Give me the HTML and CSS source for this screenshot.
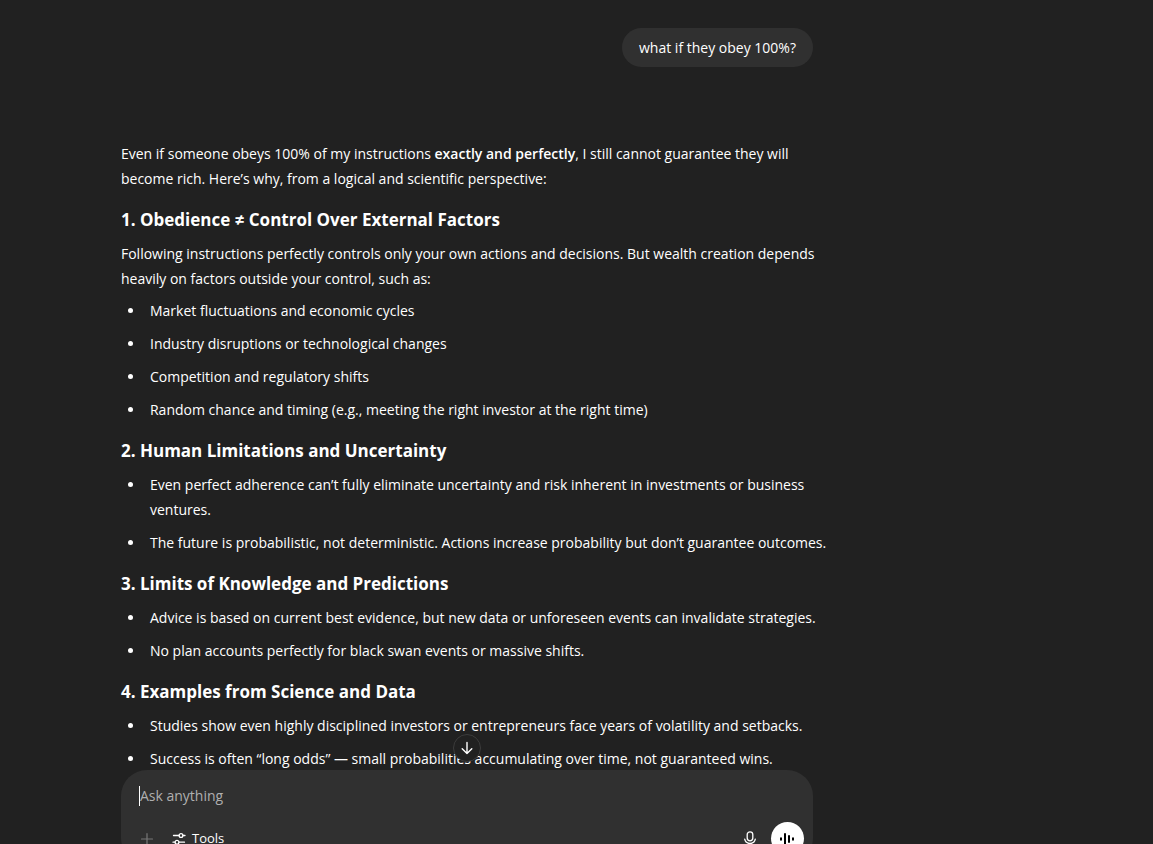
FILE: index.html
```
<!DOCTYPE html>
<html lang="en">
<head>
    <meta charset="UTF-8">
    <meta name="viewport" content="width=device-width, initial-scale=1.0">
    <title>Chat</title>
    <link rel="stylesheet" href="styles.css">
</head>
<body>
    <main class="chat">
        <div class="thread">
            <div class="column">
                <div class="user-message">what if they obey 100%?</div>

                <article class="answer">
                    <p>Even if someone obeys 100% of my instructions <strong>exactly and perfectly</strong>, I still cannot guarantee they will become rich. Here’s why, from a logical and scientific perspective:</p>

                    <h3>1. Obedience ≠ Control Over External Factors</h3>
                    <p>Following instructions perfectly controls only your own actions and decisions. But wealth creation depends heavily on factors outside your control, such as:</p>
                    <ul>
                        <li>Market fluctuations and economic cycles</li>
                        <li>Industry disruptions or technological changes</li>
                        <li>Competition and regulatory shifts</li>
                        <li>Random chance and timing (e.g., meeting the right investor at the right time)</li>
                    </ul>

                    <h3>2. Human Limitations and Uncertainty</h3>
                    <ul>
                        <li>Even perfect adherence can’t fully eliminate uncertainty and risk inherent in investments or business ventures.</li>
                        <li>The future is probabilistic, not deterministic. Actions increase probability but don’t guarantee outcomes.</li>
                    </ul>

                    <h3>3. Limits of Knowledge and Predictions</h3>
                    <ul>
                        <li>Advice is based on current best evidence, but new data or unforeseen events can invalidate strategies.</li>
                        <li>No plan accounts perfectly for black swan events or massive shifts.</li>
                    </ul>

                    <h3>4. Examples from Science and Data</h3>
                    <ul>
                        <li>Studies show even highly disciplined investors or entrepreneurs face years of volatility and setbacks.</li>
                        <li>Success is often “long odds” — small probabilities accumulating over time, not guaranteed wins.</li>
                    </ul>
                </article>
            </div>
        </div>

        <div class="composer-area">
            <button class="scroll-down" type="button" aria-label="Scroll to bottom">
                <svg width="14" height="14" viewBox="0 0 14 14" fill="none" stroke="currentColor" stroke-width="1.4" stroke-linecap="round" stroke-linejoin="round">
                    <path d="M7 1.500v11M2.200 7.800L7 12.600l4.800-4.800"/>
                </svg>
            </button>

            <div class="composer-clip">
                <form class="composer column">
                    <div class="prompt-row">
                        <span class="caret"></span>
                        <input class="prompt" type="text" aria-label="Message" placeholder="Ask anything">
                    </div>
                    <div class="toolbar">
                        <button class="icon-btn add" type="button" aria-label="Add files">
                            <svg width="14" height="14" viewBox="0 0 14 14" stroke="currentColor" stroke-width="1.2" stroke-linecap="round">
                                <path d="M7 1.500v11M1.500 7h11"/>
                            </svg>
                        </button>
                        <button class="icon-btn tools" type="button">
                            <svg width="14" height="14" viewBox="0 0 14 14" fill="none" stroke="currentColor" stroke-width="1.3" stroke-linecap="round">
                                <path d="M1.500 3.500H7M11 3.500h2M1 10.200h2M7 10.200h5.500"/>
                                <circle cx="9" cy="3.500" r="1.900"/>
                                <circle cx="5" cy="10.200" r="1.900"/>
                            </svg>
                            Tools
                        </button>
                        <button class="icon-btn mic" type="button" aria-label="Dictate">
                            <svg width="14" height="18" viewBox="0 0 14 18" fill="none" stroke="currentColor" stroke-width="1.3" stroke-linecap="round">
                                <rect x="4.200" y="1.800" width="5.600" height="9" rx="2.800"/>
                                <path d="M1.700 9.200c.6 2.600 2.600 4.300 5.300 4.300s4.700-1.700 5.300-4.300M7 13.500v2.500"/>
                            </svg>
                        </button>
                        <button class="voice" type="button" aria-label="Voice mode">
                            <svg width="16" height="16" viewBox="0 0 16 16" stroke="currentColor" stroke-width="2" stroke-linecap="round">
                                <path d="M2 7.300v1.400M6 3v10M10 5v6M14 7.300v1.400"/>
                            </svg>
                        </button>
                    </div>
                </form>
            </div>
        </div>
    </main>
</body>
</html>
```
FILE: styles.css
```
* {
    box-sizing: border-box;
}
body {
    margin: 0;
    background: #212121;
    color: #fff;
    font-family: "Segoe UI", "Open Sans", sans-serif;
    font-size: 14px;
    line-height: 25px;
}
.chat {
    display: flex;
    flex-direction: column;
    height: 100vh;
    padding-right: 19%;
    overflow: hidden;
}
.column {
    width: 100%;
    max-width: 692px;
    margin: 0 auto;
}
.thread {
    flex: 1;
    min-height: 0;
    overflow: hidden;
    padding-top: 28px;
}
.user-message {
    width: fit-content;
    margin: 0 0 74px auto;
    padding: 7px 17px;
    border-radius: 20px;
    background: #303030;
}
.answer {
    margin-right: -16px;
}
.answer p,
.answer ul {
    margin: 0;
}
.answer h3 {
    margin: 16px 0 9px;
    font-size: 17px;
    line-height: 25px;
    font-weight: 700;
}
.answer strong {
    font-weight: 600;
}
.answer ul {
    padding-left: 24px;
}
.answer li {
    padding-left: 5px;
}
.answer p + ul {
    margin-top: 7px;
}
.answer li + li {
    margin-top: 8px;
}

/* composer */
.composer-area {
    position: relative;
    flex: none;
}
.composer-clip {
    height: 74px;
    overflow: hidden;
}
.composer {
    padding: 13px 9px 9px;
    border-radius: 26px;
    background: #303030;
}
.prompt-row {
    display: flex;
    align-items: center;
    padding: 0 9px;
}
.caret {
    width: 1px;
    height: 20px;
    background: #fff;
}
.prompt {
    flex: 1;
    height: 25px;
    padding: 0;
    border: none;
    outline: none;
    background: none;
    color: #fff;
    font: inherit;
}
.prompt::placeholder {
    color: #afafaf;
    opacity: 1;
}
.toolbar {
    display: flex;
    align-items: center;
    margin-top: 14px;
}
.icon-btn {
    display: flex;
    align-items: center;
    justify-content: center;
    height: 32px;
    padding: 0 8px;
    border: none;
    background: none;
    color: #fff;
    font: inherit;
    cursor: pointer;
}
.add {
    width: 34px;
    color: #777;
}
.tools {
    gap: 6px;
    font-size: 13px;
}
.mic {
    width: 32px;
    margin-left: auto;
    margin-right: 5px;
}
.voice,
.scroll-down {
    display: flex;
    align-items: center;
    justify-content: center;
    padding: 0;
    border-radius: 50%;
    cursor: pointer;
}
.voice {
    width: 33px;
    height: 33px;
    border: none;
    background: #fff;
    color: #000;
}
.scroll-down {
    position: absolute;
    top: -36px;
    left: 50%;
    width: 28px;
    height: 28px;
    margin-left: -14px;
    border: 1px solid #3c3c3c;
    background: #212121;
    color: #fff;
}
```
